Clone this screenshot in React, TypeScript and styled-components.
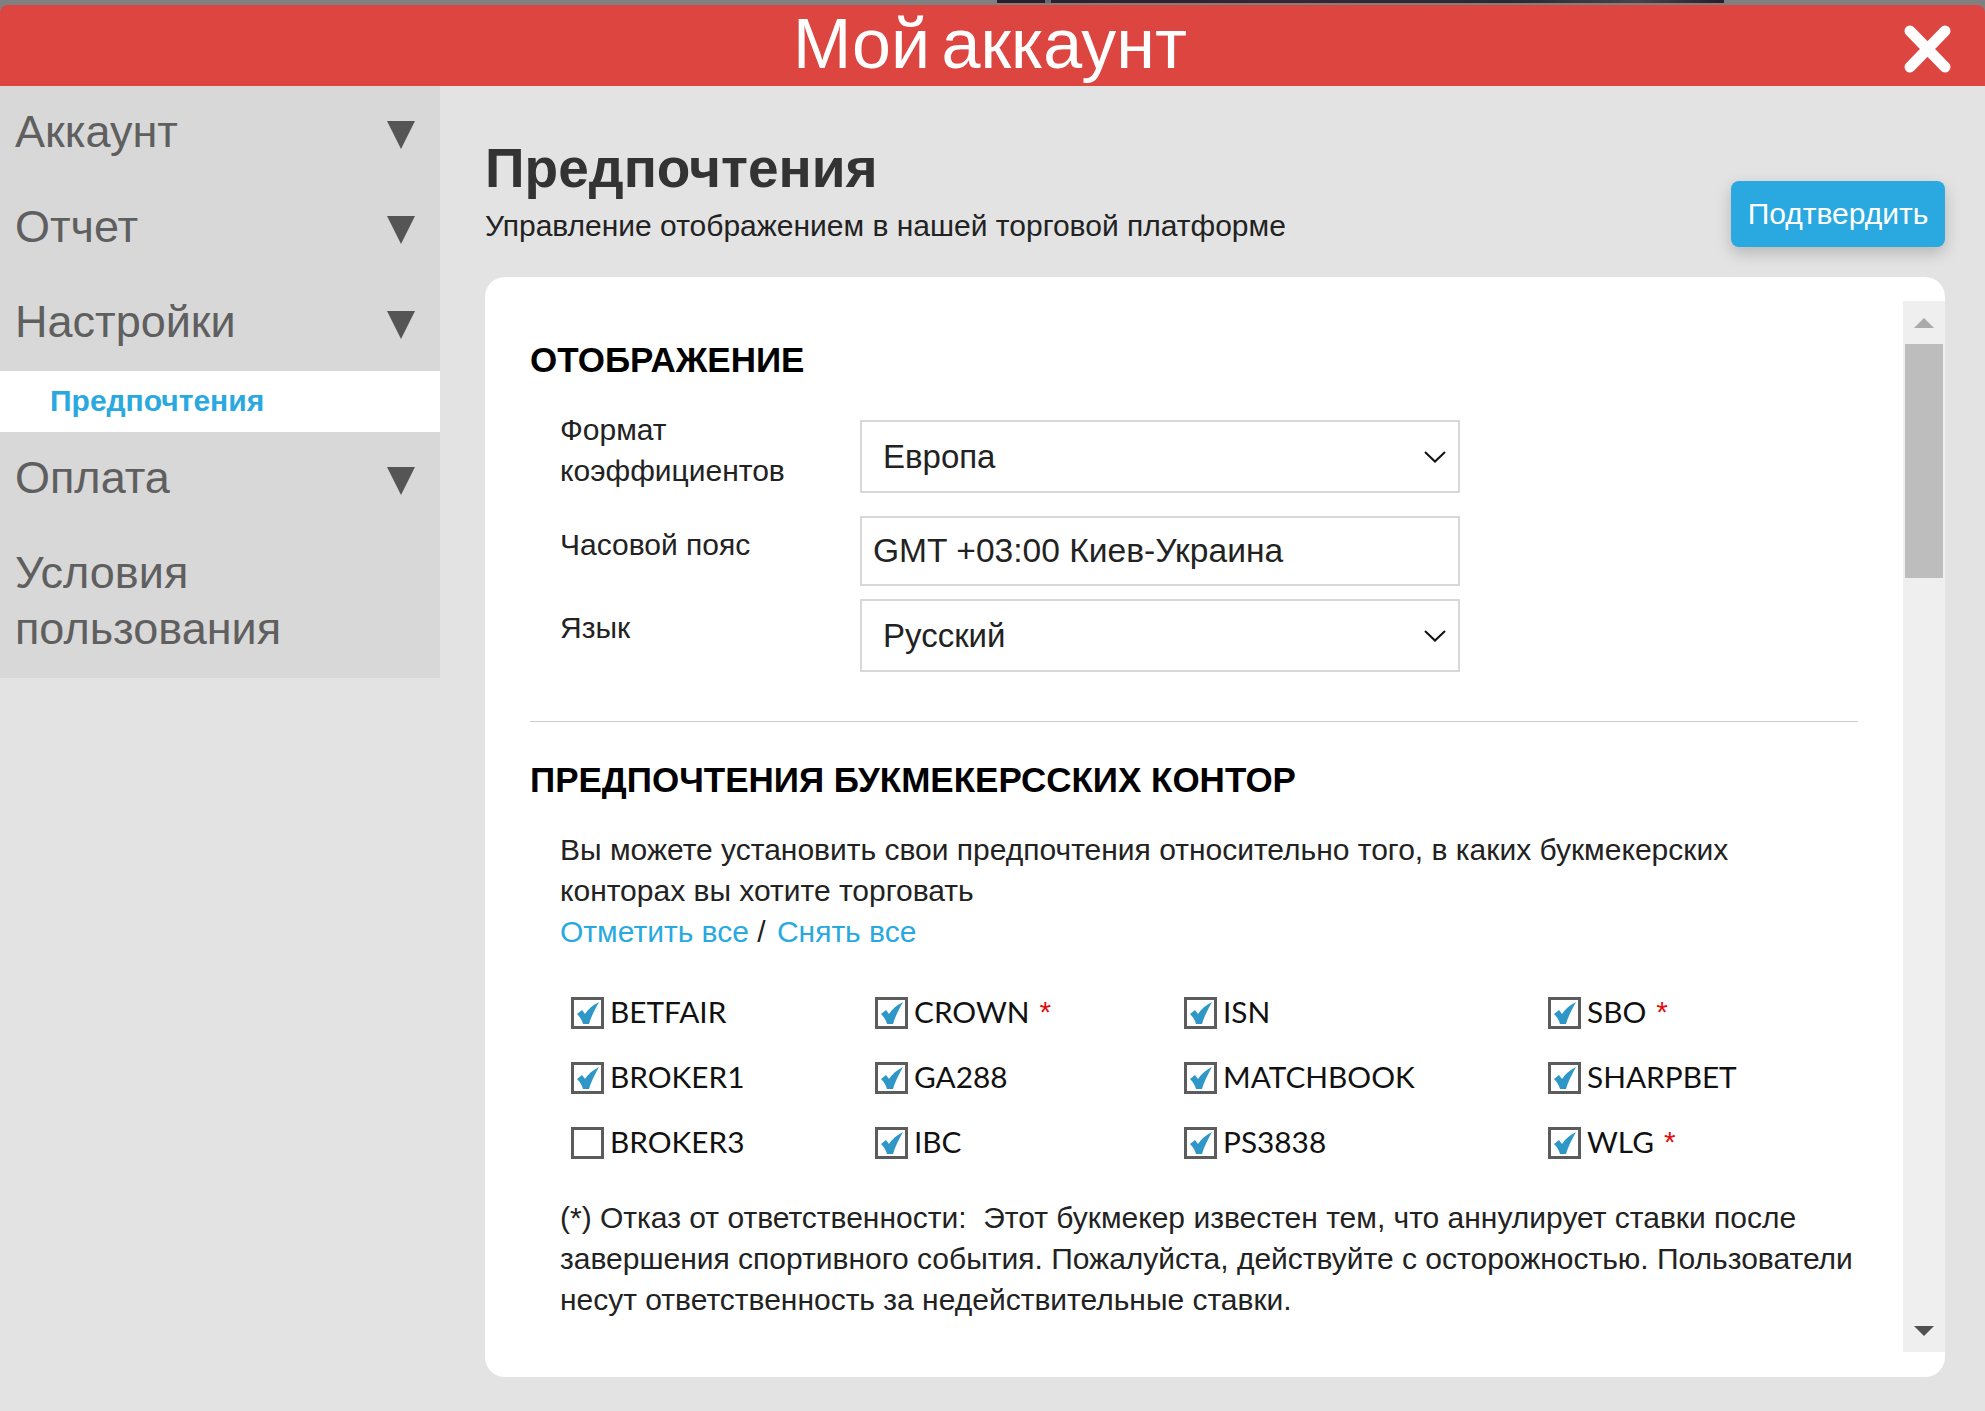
import React from 'react';
import styled, { createGlobalStyle } from 'styled-components';

const GlobalStyle = createGlobalStyle`
  html, body {
    margin: 0;
    padding: 0;
    background: #e3e3e3;
    font-family: "Liberation Sans", Arial, sans-serif;
  }
  * {
    box-sizing: border-box;
  }
`;

const Page = styled.div`
  width: 1985px;
  height: 1411px;
  overflow: hidden;
  background: #e3e3e3;
`;

const TopStrip = styled.div`
  height: 5px;
  padding-left: 997px;
  background: #808080;
`;

const StripPicture = styled.div`
  width: 727px;
  height: 3px;
  background: linear-gradient(to right, #2a1c28 0, #2a1c28 48px, #6a6a6a 48px, #6a6a6a 54px, #2e1f2c 54px, #3a2434 300px, #2a2a30 520px, #4a4248 640px, #2a1c28 100%);
`;

const HeaderWrap = styled.div`
  background: #808080;
`;

const Header = styled.header`
  height: 81px;
  position: relative;
  display: flex;
  align-items: center;
  justify-content: center;
  padding: 0 5px 3px 0;
  background: #dd4540;
  border-radius: 8px 8px 0 0;
`;

const HeaderTitle = styled.h1`
  margin: 0;
  font-size: 70px;
  font-weight: 400;
  color: #fff;
  line-height: 78px;
  word-spacing: -8px;
`;

const CloseButton = styled.button`
  position: absolute;
  right: 34px;
  top: 20px;
  width: 48px;
  height: 48px;
  padding: 0;
  border: 0;
  background: none;
  display: block;
`;

const Body = styled.div`
  display: flex;
  align-items: flex-start;
`;

const Sidebar = styled.nav`
  width: 440px;
  flex: none;
  background: #d8d8d8;
`;

const MenuItem = styled.div`
  display: flex;
  align-items: center;
  justify-content: space-between;
  padding: 18px 25px 21px 15px;
  font-size: 45px;
  line-height: 56px;
  color: #5f5f5f;
`;

const MenuArrow = styled.span`
  width: 0;
  height: 0;
  margin-top: 6px;
  border-left: 14px solid transparent;
  border-right: 14px solid transparent;
  border-top: 28px solid #555;
`;

const SubItem = styled.div`
  height: 61px;
  padding-left: 50px;
  background: #fff;
  font-size: 30px;
  font-weight: 700;
  line-height: 59px;
  color: #29a9e0;
`;

const Main = styled.main`
  flex: 1;
  padding: 0 40px 0 45px;
`;

const MainHead = styled.div`
  height: 191px;
  display: flex;
  align-items: flex-end;
  justify-content: space-between;
  padding-bottom: 31px;
`;

const PageTitle = styled.h2`
  margin: 0 0 3px;
  font-size: 55px;
  line-height: 68px;
  font-weight: 700;
  color: #333;
`;

const PageSub = styled.p`
  margin: 0;
  font-size: 30px;
  line-height: 41px;
  color: #222;
`;

const ConfirmButton = styled.button`
  width: 214px;
  height: 66px;
  margin-bottom: -1px;
  padding: 0;
  border: 0;
  border-radius: 8px;
  background: #29a9e0;
  color: #fff;
  font-family: inherit;
  font-size: 30px;
  box-shadow: 0 6px 16px rgba(0, 0, 0, 0.2);
`;

const Card = styled.section`
  height: 1100px;
  display: flex;
  padding: 24px 0 25px 45px;
  background: #fff;
  border-radius: 20px;
`;

const Content = styled.div`
  flex: 1;
  min-width: 0;
  padding: 38px 45px 0 0;
`;

const SectionTitle = styled.h3`
  margin: 0;
  font-size: 35px;
  line-height: 42px;
  font-weight: 700;
  color: #000;
`;

const Form = styled.div`
  display: flex;
  flex-direction: column;
  margin-top: 28px;
  padding-left: 30px;
`;

const FormRow = styled.div<{ $gap: number }>`
  display: flex;
  align-items: flex-start;
  margin-bottom: ${(p) => p.$gap}px;
`;

const FormLabel = styled.div<{ $top: number }>`
  width: 300px;
  flex: none;
  padding-top: ${(p) => p.$top}px;
  font-size: 30px;
  line-height: 41px;
  color: #222;
`;

const Field = styled.div<{ $pad: number; $h: number; $top?: number; $size: number }>`
  width: 600px;
  height: ${(p) => p.$h}px;
  margin-top: ${(p) => p.$top || 0}px;
  display: flex;
  align-items: center;
  justify-content: space-between;
  padding: 0 12px 0 ${(p) => p.$pad}px;
  border: 2px solid #d8d8d8;
  font-size: ${(p) => p.$size}px;
  color: #222;
`;

const Divider = styled.hr`
  margin: 49px 0 37px;
  border: 0;
  border-top: 1px solid #ccc;
`;

const Paragraph = styled.p`
  margin: 0;
  padding-left: 30px;
  font-size: 30px;
  line-height: 41px;
  color: #222;
`;

const IntroParagraph = styled(Paragraph)`
  margin-top: 28px;
`;

const Link = styled.a<{ $left?: number }>`
  margin-left: ${(p) => p.$left || 0}px;
  color: #29a9e0;
`;

const BookieGrid = styled.div`
  display: grid;
  grid-template-columns: 304px 309px 364px 1fr;
  grid-auto-rows: 65px;
  margin: 28px 0 22px;
  padding-left: 41px;
`;

const Bookie = styled.label`
  display: flex;
  align-items: center;
  gap: 6px;
  padding-bottom: 2px;
  font-family: Lato, "Liberation Sans", sans-serif;
  font-size: 29.8px;
  color: #111;
`;

const Box = styled.span`
  width: 33px;
  height: 32px;
  flex: none;
  display: flex;
  align-items: center;
  justify-content: center;
  margin-top: 2px;
  border: 3px solid #5c5c5c;
`;

const Star = styled.span`
  margin-left: 4px;
  font-family: "Liberation Sans", sans-serif;
  color: #e01010;
`;

const Scrollbar = styled.div`
  width: 42px;
  flex: none;
  display: flex;
  flex-direction: column;
  align-items: center;
  background: #efefef;
`;

const ScrollButton = styled.div`
  height: 43px;
  width: 100%;
  flex: none;
  display: flex;
  align-items: center;
  justify-content: center;
`;

const ScrollThumb = styled.div`
  width: 38px;
  height: 234px;
  background: #bdbdbd;
`;

const ScrollSpace = styled.div`
  flex: 1;
`;

const ScrollUp = styled.span`
  width: 0;
  height: 0;
  border-left: 10px solid transparent;
  border-right: 10px solid transparent;
  border-bottom: 10px solid #aaa;
`;

const ScrollDown = styled.span`
  width: 0;
  height: 0;
  border-left: 10px solid transparent;
  border-right: 10px solid transparent;
  border-top: 10px solid #505050;
`;

const Chevron = () => (
  <svg width="22" height="12" viewBox="0 0 22 12" fill="none">
    <path d="M1 1l10 9.5L21 1" stroke="#111" strokeWidth="2" />
  </svg>
);

const Check = () => (
  <svg width="22" height="22" viewBox="0 0 22 22">
    <path d="M0 12L5 8l3 4C11 7 16 3 22 0c-4 7-8 15-10 22H6C5 18 3 15 0 12z" fill="#2e97c8" />
  </svg>
);

const menuTop = ['Аккаунт', 'Отчет', 'Настройки'];

const bookies: { name: string; on: boolean; star?: boolean }[] = [
  { name: 'BETFAIR', on: true },
  { name: 'CROWN', on: true, star: true },
  { name: 'ISN', on: true },
  { name: 'SBO', on: true, star: true },
  { name: 'BROKER1', on: true },
  { name: 'GA288', on: true },
  { name: 'MATCHBOOK', on: true },
  { name: 'SHARPBET', on: true },
  { name: 'BROKER3', on: false },
  { name: 'IBC', on: true },
  { name: 'PS3838', on: true },
  { name: 'WLG', on: true, star: true },
];

export default function App() {
  return (
    <Page>
      <GlobalStyle />
      <TopStrip>
        <StripPicture />
      </TopStrip>
      <HeaderWrap>
        <Header>
          <HeaderTitle>Мой аккаунт</HeaderTitle>
          <CloseButton aria-label="close">
            <svg width="48" height="48" viewBox="0 0 48 48">
              <path d="M7 6l35 36M42 6L7 42" stroke="#fff" strokeWidth="11" strokeLinecap="round" />
            </svg>
          </CloseButton>
        </Header>
      </HeaderWrap>
      <Body>
        <Sidebar>
          {menuTop.map((m) => (
            <MenuItem key={m}>
              {m}
              <MenuArrow />
            </MenuItem>
          ))}
          <SubItem>Предпочтения</SubItem>
          <MenuItem>
            Оплата
            <MenuArrow />
          </MenuItem>
          <MenuItem>
            Условия
            <br />
            пользования
          </MenuItem>
        </Sidebar>
        <Main>
          <MainHead>
            <div>
              <PageTitle>Предпочтения</PageTitle>
              <PageSub>Управление отображением в нашей торговой платформе</PageSub>
            </div>
            <ConfirmButton>Подтвердить</ConfirmButton>
          </MainHead>
          <Card>
            <Content>
              <SectionTitle>ОТОБРАЖЕНИЕ</SectionTitle>
              <Form>
                <FormRow $gap={23}>
                  <FormLabel $top={0}>
                    Формат
                    <br />
                    коэффициентов
                  </FormLabel>
                  <Field $pad={21} $h={73} $top={11} $size={33}>
                    Европа
                    <Chevron />
                  </Field>
                </FormRow>
                <FormRow $gap={13}>
                  <FormLabel $top={8}>Часовой пояс</FormLabel>
                  <Field $pad={11} $h={70} $size={33.6}>GMT +03:00 Киев-Украина</Field>
                </FormRow>
                <FormRow $gap={0}>
                  <FormLabel $top={8}>Язык</FormLabel>
                  <Field $pad={21} $h={73} $size={33}>
                    Русский
                    <Chevron />
                  </Field>
                </FormRow>
              </Form>
              <Divider />
              <SectionTitle>ПРЕДПОЧТЕНИЯ БУКМЕКЕРССКИХ КОНТОР</SectionTitle>
              <IntroParagraph>
                Вы можете установить свои предпочтения относительно того, в каких букмекерских
                конторах вы хотите торговать
                <br />
                <Link>Отметить все</Link> / <Link $left={3}>Снять все</Link>
              </IntroParagraph>
              <BookieGrid>
                {bookies.map((b) => (
                  <Bookie key={b.name}>
                    <Box>{b.on && <Check />}</Box>
                    {b.name}
                    {b.star && <Star>*</Star>}
                  </Bookie>
                ))}
              </BookieGrid>
              <Paragraph>
                (*) Отказ от ответственности:&nbsp; Этот букмекер известен тем, что аннулирует ставки после
                завершения спортивного события. Пожалуйста, действуйте с осторожностью. Пользователи несут
                ответственность за недействительные ставки.
              </Paragraph>
            </Content>
            <Scrollbar>
              <ScrollButton>
                <ScrollUp />
              </ScrollButton>
              <ScrollThumb />
              <ScrollSpace />
              <ScrollButton>
                <ScrollDown />
              </ScrollButton>
            </Scrollbar>
          </Card>
        </Main>
      </Body>
    </Page>
  );
}
